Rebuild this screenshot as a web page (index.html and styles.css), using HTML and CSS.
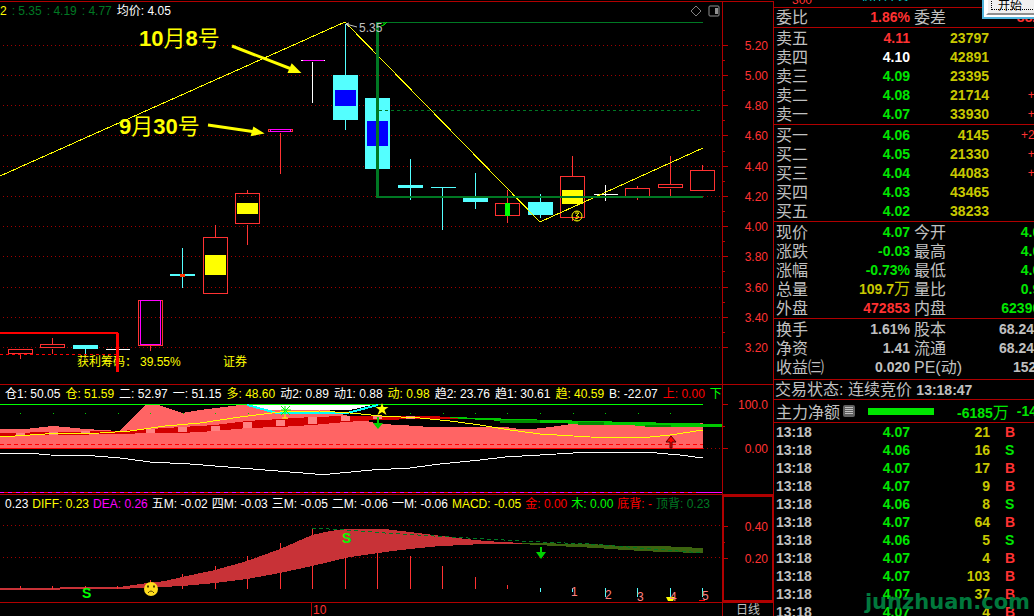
FILE: index.html
```
<!DOCTYPE html>
<html lang="zh-CN">
<head>
    <meta charset="UTF-8">
    <meta name="viewport" content="width=device-width, initial-scale=1.0">
    <title>日线</title>
    <link rel="stylesheet" href="styles.css">
</head>
<body>
<div class="app">
    <main class="charts">
        <!-- K线 -->
        <section class="panel">
            <div class="plot">
                <div class="legend legend-top">
                    <span class="yellow">2</span>
                    <span class="dark">: 5.35</span>
                    <span class="dark">: 4.19</span>
                    <span class="dark">: 4.77</span>
                    <span>均价: 4.05</span>
                    <svg class="tools" width="30" height="14" viewBox="0 0 30 14">
                        <path d="M6 2L11 7L6 12L1 7Z" fill="none" stroke="#808080"/>
                        <rect x="19" y="2" width="10" height="10" rx="1" fill="none" stroke="#909090"/>
                        <rect x="25" y="4" width="3" height="6" fill="#909090"/>
                    </svg>
                </div>
                <svg class="canvas k-canvas" viewBox="0 20 722 364" preserveAspectRatio="xMaxYMid meet">
                    <path class="grid" transform="translate(0 .5)" d="M3 45H721M3 75H721M3 105H721M3 135H721M3 166H721M3 196H721M3 226H721M3 256H721M3 287H721M3 317H721M3 347H721"/>
                    <g class="crisp" transform="translate(.5 .5)" fill="none">
                        <g stroke="#ff3232">
                            <path d="M8 349h24v4H8zM20 348v1M20 353v5"/>
                            <path d="M40 344h24v3H40zM52 337v7M52 348v5"/>
                            <path d="M138 300h24v45h-24zM150 345v5"/>
                            <path d="M203 237h24v56h-24zM215 224v13"/>
                            <path d="M235 193h24v30h-24zM247 189v4M247 224v20"/>
                            <path d="M268 129h24v2h-24zM280 132v41"/>
                            <path d="M495 203h24v12h-24zM507 189v33"/>
                            <path d="M560 176h24v41h-24zM572 155v21M572 218v2"/>
                            <path d="M625 188h24v8h-24zM637 185v3M637 196v3"/>
                            <path d="M658 184h24v3h-24zM670 155v29M670 188v8"/>
                            <path d="M690 170h24v20h-24zM702 164v6"/>
                        </g>
                        <g stroke="#ff00ff">
                            <path d="M140 300h20v44h-20zM270 129h20v2h-20z"/>
                            <path d="M302 60h21"/>
                        </g>
                        <g stroke="#fff">
                            <path d="M105 349h24M300 60h2M323 60h1M312 61v41M593 194h24M605 184v16"/>
                        </g>
                        <g stroke="#54ffff">
                            <path d="M85 344v9M182 247v40M345 23v106M410 158v41M430 187h25M442 187v42M475 172v32M475 202v6M540 193v24"/>
                        </g>
                    </g>
                    <g class="crisp">
                        <g fill="#54ffff">
                            <rect x="73" y="345" width="25" height="4"/>
                            <rect x="170" y="274" width="25" height="2"/>
                            <rect x="333" y="75" width="25" height="45"/>
                            <rect x="365" y="98" width="25" height="71"/>
                            <rect x="398" y="185" width="25" height="3"/>
                            <rect x="463" y="197" width="25" height="5"/>
                            <rect x="528" y="202" width="25" height="13"/>
                        </g>
                        <g fill="#0000ff">
                            <rect x="335" y="90" width="21" height="16"/>
                            <rect x="367" y="121" width="21" height="25"/>
                        </g>
                        <g fill="#ffff00">
                            <rect x="205" y="255" width="21" height="20"/>
                            <rect x="237" y="203" width="21" height="11"/>
                            <rect x="562" y="190" width="21" height="14"/>
                        </g>
                        <rect x="180" y="274" width="5" height="3" fill="#ff3200"/>
                        <rect x="505" y="203" width="5" height="13" fill="#00ff00"/>
                    </g>
                    <path class="crisp trend" d="M0 176L345 22L540 222L703 148"/>
                    <g class="crisp">
                        <g fill="#007823">
                            <rect x="376" y="22" width="3" height="176"/>
                            <rect x="377" y="22" width="326" height="1"/>
                            <rect x="377" y="196" width="326" height="2"/>
                        </g>
                        <path d="M379 110.500H703" stroke="#007823" stroke-dasharray="3 3"/>
                        <path d="M0 354.500H116" stroke="#ff0000" stroke-dasharray="3 3"/>
                    </g>
                    <path d="M346 24L357 27M346 24l3 3M346 24l3-1" stroke="#c0c0c0" fill="none"/>
                    <text x="359" y="32" class="label gray">5.35</text>
                    <path d="M381 26l3-1 3-3M384 22v3" stroke="#00e600" fill="none"/>
                    <text x="77" y="366" class="label yellow">获利筹码：</text>
                    <text x="140" y="366" class="label yellow">39.55%</text>
                    <text x="223" y="366" class="label yellow">证券</text>
                    <g class="crisp" fill="#ff0000">
                        <rect x="0" y="332" width="118" height="2"/>
                        <rect x="116" y="333" width="3" height="39"/>
                    </g>
                    <g stroke="#ffff00" fill="none">
                        <circle cx="577" cy="216" r="5"/>
                        <path d="M575 213h4l-3 3h2q2 2-3 3M577 211v1M577 220v1"/>
                    </g>
                    <text x="139" y="46" class="note"><tspan class="num">10</tspan>月<tspan class="num">8</tspan>号</text>
                    <text x="119" y="134" class="note"><tspan class="num">9</tspan>月<tspan class="num">30</tspan>号</text>
                    <g stroke="#ffff00" stroke-width="3" fill="#ffff00">
                        <path d="M232 46L294 70M208 125L256 132"/>
                        <path d="M292 65L299 72L289 72ZM254 128L262 133L252 135Z" stroke-width="2"/>
                    </g>
                </svg>
            </div>
            <svg class="axis" height="382" viewBox="0 2 50 382" preserveAspectRatio="xMinYMin meet">
                <path class="crisp" transform="translate(0 .5)" stroke="#c00000" d="M0 45h5M0 75h5M0 105h5M0 135h5M0 166h5M0 196h5M0 226h5M0 256h5M0 287h5M0 317h5M0 347h5M0 60h2M0 90h2M0 120h2M0 151h2M0 181h2M0 211h2M0 241h2M0 271h2M0 302h2M0 332h2"/>
                <g class="label axis-label">
                    <text x="45" y="50">5.20</text>
                    <text x="45" y="80">5.00</text>
                    <text x="45" y="110">4.80</text>
                    <text x="45" y="140">4.60</text>
                    <text x="45" y="171">4.40</text>
                    <text x="45" y="201">4.20</text>
                    <text x="45" y="231">4.00</text>
                    <text x="45" y="261">3.80</text>
                    <text x="45" y="292">3.60</text>
                    <text x="45" y="322">3.40</text>
                    <text x="45" y="352">3.20</text>
                </g>
            </svg>
        </section>

        <!-- 仓位指标 -->
        <section class="panel">
            <div class="plot">
                <div class="legend">
                    <span>仓1: 50.05</span>
                    <span class="yellow">仓: 51.59</span>
                    <span>二: 52.97</span>
                    <span>一: 51.15</span>
                    <span class="yellow">多: 48.60</span>
                    <span>动2: 0.89</span>
                    <span>动1: 0.88</span>
                    <span class="yellow">动: 0.98</span>
                    <span>趋2: 23.76</span>
                    <span>趋1: 30.61</span>
                    <span class="yellow">趋: 40.59</span>
                    <span>B: -22.07</span>
                    <span class="red">上: 0.00</span>
                    <span class="lime">下</span>
                </div>
                <svg class="canvas pos-canvas" viewBox="0 403 722 91" preserveAspectRatio="xMaxYMid meet">
                    <g class="crisp">
                        <path fill="#ff6464" d="M0 429H25L52 426L65 427L85 429L119 431L146 405H158L182 413L200 410L240 405H250L268 409H325L345 415L362 420L380 424L402 425L430 427H505L520 429H532L550 427L572 424L600 424L640 425H690L703 423V449H0Z"/>
                        <path fill="#fff" d="M252 405H372L350 410H265Z"/>
                        <path fill="#d20000" d="M0 433L119 431L150 429L182 427L215 425L247 421L280 419L312 417L345 416L377 416L420 416L460 417V419L420 419L377 420L345 422L312 425L280 427L247 428L215 431L182 433L150 433L119 434L0 436Z"/>
                        <path fill="#ff8282" d="M16 433h9v3h-9zM49 432h9v3h-9zM81 431h9v3h-9zM146 429h9v4h-9zM178 427h9v5h-9zM211 426h9v5h-9zM243 422h9v6h-9zM276 420h9v6h-9zM308 417h9v7h-9zM341 416h9v5h-9zM373 416h9v3h-9zM406 416h9v3h-9z"/>
                        <path fill="#00c800" d="M450 417L483 418L590 421L722 424V427L680 427L620 425L550 423L483 420L450 418Z"/>
                        <path fill="#008c00" d="M500 420h40v3h-40zM578 422h26v3h-26zM645 425h26v2h-26z"/>
                        <path stroke="#00ff00" d="M0 404.500H703"/>
                        <path stroke="#00c800" stroke-dasharray="1 31.500" d="M20 413.500H703"/>
                        <path stroke="#ff0000" d="M0 448.500H703"/>
                        <path stroke="#ff0000" stroke-dasharray="4 3" d="M0 444.500H703"/>
                        <path class="grid" d="M703 448.500H721"/>
                        <path stroke="#00ffff" stroke-width="2" fill="none" d="M247 405L277 413H347L378 405"/>
                        <path class="trend" d="M0 437L45 434L100 433L130 431L165 426L200 423L240 417L280 412L320 411L350 413L382 416L420 418L450 421L480 425L510 430L540 434L590 437L640 438L670 435L703 430"/>
                        <path stroke="#fff" fill="none" d="M0 453H28L50 455L95 456L120 458L150 462L190 464L240 468L290 472L315 474H330L372 470L410 468L440 464L480 460L505 457L540 455L590 452H645L680 455L703 458"/>
                        <path stroke="#ff0000" d="M0 492.500H722"/>
                        <path stroke="#ff00ff" stroke-dasharray="4 4" d="M0 492.500H700"/>
                        <path stroke="#ff00ff" d="M700 492.500h22"/>
                    </g>
                    <path stroke="#00ff00" fill="none" d="M281 406l9 9M290 406l-9 9M281 410h10M285 406v9"/>
                    <path stroke="#ffff00" fill="none" d="M285 414v4M282 418h6"/>
                    <path fill="#ffff00" d="M382 403l1.500 4h5l-4 3l2 5l-4.500-3l-4.500 3l2-5l-4-3h5z"/>
                    <path fill="#00d200" d="M377 417h2v6h4l-5 6l-5-6h4z"/>
                    <path fill="#ff0000" stroke="#500000" d="M670 448h2v-6h4l-5-6l-5 6h4z"/>
                </svg>
            </div>
            <svg class="axis" height="109" viewBox="0 385 50 109" preserveAspectRatio="xMinYMin meet">
                <path class="crisp" transform="translate(0 .5)" stroke="#c00000" d="M0 404h5M0 448h5M0 426h2"/>
                <g class="label axis-label">
                    <text x="45" y="409">100.0</text>
                    <text x="45" y="453">0.00</text>
                </g>
            </svg>
        </section>

        <!-- MACD -->
        <section class="panel">
            <div class="plot">
                <div class="legend legend-macd">
                    <span>0.23</span>
                    <span class="yellow">DIFF: 0.23</span>
                    <span class="magenta">DEA: 0.26</span>
                    <span>五M: -0.02</span>
                    <span>四M: -0.03</span>
                    <span>三M: -0.05</span>
                    <span>二M: -0.06</span>
                    <span>一M: -0.06</span>
                    <span class="yellow">MACD: -0.05</span>
                    <span class="red">金: 0.00</span>
                    <span class="lime">木: 0.00</span>
                    <span class="red">底背: -</span>
                    <span class="dark">顶背: 0.23</span>
                </div>
                <svg class="canvas macd-canvas" viewBox="0 513 722 88" preserveAspectRatio="xMaxYMid meet">
                    <path class="grid" d="M3 525.500H721M3 557.500H721"/>
                    <g class="crisp">
                        <path fill="#c83237" d="M0 588L120 587L140 584L165 581L182 577L215 570L247 561L280 549L312 535L330 531L345 529H385L410 532L450 537L475 540L500 542L525 543V544H480L465 545L440 546L410 549L385 552L350 557L312 566L280 573L247 579L215 583L182 586L120 589L0 590Z"/>
                        <path fill="#3c640f" d="M522 543L590 544L620 546L660 546L703 548V553L662 552L625 550L597 548L555 546L522 544Z"/>
                        <path stroke="#ff3232" transform="translate(.5 0)" d="M20 586v3M52 586v3M85 586v3M117 586v3M150 580v9M182 574v3M182 586v3M215 566v4M215 583v6M247 556v5M247 579v10M280 543v6M280 573v16M312 529v6M312 566v23M345 557v32M377 553v36M410 556v33M442 566v23M475 577v12M507 585v4"/>
                        <path stroke="#54ffff" transform="translate(.5 0)" d="M540 588v4M572 588v4M605 588v9M637 588v9M670 588v9M702 588v9"/>
                        <path stroke="#007823" fill="none" stroke-dasharray="4 3" d="M312 528L345 530L385 533L450 537L540 542L590 544L703 553"/>
                    </g>
                    <path fill="#00d200" d="M540 547h2v5h4l-5 7l-5-7h4z"/>
                    <path fill="#ffff00" d="M666 597h9l-2 4h-5z"/>
                    <rect x="699" y="600" width="6" height="1" fill="#ff0000"/>
                    <g class="label pink">
                        <text x="571" y="596">1</text>
                        <text x="605" y="599">2</text>
                        <text x="637" y="601">3</text>
                        <text x="670" y="601">4</text>
                        <text x="702" y="600">5</text>
                    </g>
                    <g class="signal">
                        <text x="82" y="598">S</text>
                        <text x="342" y="543">S</text>
                    </g>
                    <circle cx="151" cy="589" r="7" fill="#ffdc1e"/>
                    <path d="M147 586.500h2M153 586.500h2" stroke="#503c00" stroke-width="2"/>
                    <path d="M148 593q3-4 6 0" fill="none" stroke="#503c00"/>
                </svg>
            </div>
            <svg class="axis selected" height="107" viewBox="0 494 50 107" preserveAspectRatio="xMinYMin meet">
                <path class="crisp" transform="translate(0 .5)" stroke="#c00000" d="M0 525h5M0 557h5M0 541h2"/>
                <g class="label axis-label">
                    <text x="45" y="530">0.40</text>
                    <text x="45" y="562">0.20</text>
                </g>
            </svg>
        </section>

        <footer class="timeline">
            <span class="month">10</span>
            <span class="period">日线</span>
        </footer>
    </main>

    <aside class="quote">
        <div class="code-row"><span class="tag">300</span><span class="stock">软件开发</span></div>
        <table class="pairs first">
            <tr><th>委比</th><td class="rise">1.86%</td><th class="second">委差</th><td class="rise">8829</td></tr>
        </table>
        <table class="book">
            <tr><th>卖五</th><td class="rise">4.11</td><td class="vol">23797</td><td></td></tr>
            <tr><th>卖四</th><td class="flat">4.10</td><td class="vol">42891</td><td></td></tr>
            <tr><th>卖三</th><td class="fall">4.09</td><td class="vol">23395</td><td></td></tr>
            <tr><th>卖二</th><td class="fall">4.08</td><td class="vol">21714</td><td class="rise diff">+10</td></tr>
            <tr><th>卖一</th><td class="fall">4.07</td><td class="vol">33930</td><td class="rise diff">+21</td></tr>
        </table>
        <table class="book">
            <tr><th>买一</th><td class="fall">4.06</td><td class="vol">4145</td><td class="rise diff">+200</td></tr>
            <tr><th>买二</th><td class="fall">4.05</td><td class="vol">21330</td><td class="rise diff">+16</td></tr>
            <tr><th>买三</th><td class="fall">4.04</td><td class="vol">44083</td><td class="rise diff">+12</td></tr>
            <tr><th>买四</th><td class="fall">4.03</td><td class="vol">43465</td><td></td></tr>
            <tr><th>买五</th><td class="fall">4.02</td><td class="vol">38233</td><td></td></tr>
        </table>
        <table class="pairs">
            <tr><th>现价</th><td class="fall">4.07</td><th class="second">今开</th><td class="fall">4.06</td></tr>
            <tr><th>涨跌</th><td class="fall">-0.03</td><th class="second">最高</th><td class="fall">4.09</td></tr>
            <tr><th>涨幅</th><td class="fall">-0.73%</td><th class="second">最低</th><td class="fall">4.06</td></tr>
            <tr><th>总量</th><td class="vol">109.7<i>万</i></td><th class="second">量比</th><td class="fall">0.96</td></tr>
            <tr><th>外盘</th><td class="rise">472853</td><th class="second">内盘</th><td class="fall">623906</td></tr>
        </table>
        <table class="pairs basics">
            <tr><th>换手</th><td>1.61%</td><th class="second">股本</th><td>68.24亿</td></tr>
            <tr><th>净资</th><td>1.41</td><th class="second">流通</th><td>68.24亿</td></tr>
            <tr><th>收益㈢</th><td>0.020</td><th class="second">PE(动)</th><td>152.6</td></tr>
        </table>
        <div class="state">交易状态: 连续竞价 <b>13:18:47</b></div>
        <div class="flow">
            <span>主力净额</span>
            <svg width="12" height="12" viewBox="0 0 12 12">
                <rect width="12" height="12" rx="2" fill="#606060"/>
                <path class="crisp" d="M2 2.500h8M2 4.500h8M2 6.500h8M2 8.500h8" stroke="#c0c0c0"/>
            </svg>
            <span class="bar"></span>
            <span class="fall amount"><b>-6185</b>万</span>
            <b class="fall">-14%</b>
        </div>
        <table class="ticks">
            <tr><td>13:18</td><td class="fall">4.07</td><td class="vol">21</td><td class="rise">B</td></tr>
            <tr><td>13:18</td><td class="fall">4.06</td><td class="vol">16</td><td class="fall">S</td></tr>
            <tr><td>13:18</td><td class="fall">4.07</td><td class="vol">17</td><td class="rise">B</td></tr>
            <tr><td>13:18</td><td class="fall">4.07</td><td class="vol">9</td><td class="rise">B</td></tr>
            <tr><td>13:18</td><td class="fall">4.06</td><td class="vol">8</td><td class="fall">S</td></tr>
            <tr><td>13:18</td><td class="fall">4.07</td><td class="vol">64</td><td class="rise">B</td></tr>
            <tr><td>13:18</td><td class="fall">4.06</td><td class="vol">5</td><td class="fall">S</td></tr>
            <tr><td>13:18</td><td class="fall">4.07</td><td class="vol">4</td><td class="rise">B</td></tr>
            <tr><td>13:18</td><td class="fall">4.07</td><td class="vol">103</td><td class="rise">B</td></tr>
            <tr><td>13:18</td><td class="fall">4.07</td><td class="vol">37</td><td class="rise">B</td></tr>
            <tr><td>13:18</td><td class="fall">4.07</td><td class="vol">4</td><td class="rise">B</td></tr>
        </table>
        <div class="dialog"><button type="button">开始</button></div>
        <div class="watermark">junzhuan.com</div>
    </aside>
</div>
</body>
</html>
```

FILE: styles.css
```
* {
    box-sizing: border-box;
}
body {
    margin: 0;
    background: #000;
    color: #fff;
    font-family: "Liberation Sans", "Noto Sans CJK SC", sans-serif;
    font-size: 12px;
    overflow: hidden;
}
.app {
    display: grid;
    grid-template-columns: minmax(0, 1fr) 260px;
    height: 100vh;
}

/* 左侧图表 */
.charts {
    padding-top: 1px;
    min-width: 0;
}
.panel {
    display: flex;
    border-top: 1px solid #b00000;
}
.plot {
    flex: 1;
    min-width: 0;
}
.legend {
    display: flex;
    gap: 5px;
    height: 18px;
    line-height: 18px;
    padding-left: 5px;
    white-space: nowrap;
    overflow: hidden;
}
.legend-top {
    padding-left: 0;
}
.legend-macd {
    gap: 4px;
}
.tools {
    margin: 2px 2px 0 auto;
}
.canvas {
    display: block;
    width: 100%;
}
.k-canvas {
    height: 364px;
}
.pos-canvas {
    height: 91px;
}
.macd-canvas {
    height: 88px;
}
.axis {
    display: block;
    width: 52px;
    flex: none;
    border-left: 1px solid #b00000;
    border-right: 1px solid #b00000;
}
.axis.selected {
    outline: 2px solid #b00000;
    outline-offset: -2px;
}
.crisp {
    shape-rendering: crispEdges;
}
.grid {
    stroke: #a00000;
    stroke-dasharray: 1 3;
}
.trend {
    fill: none;
    stroke: #ffff00;
}
.label {
    font-size: 12px;
}
.axis-label {
    fill: #ff3232;
    text-anchor: end;
}
.note {
    font-size: 22px;
    fill: #ffff00;
}
.note .num {
    font-weight: bold;
}
.signal {
    font-size: 14px;
    font-weight: bold;
    fill: #00ff00;
}
.yellow { color: #ffff00; fill: #ffff00; }
.magenta { color: #ff00ff; }
.red { color: #ff0000; }
.lime { color: #00ff00; }
.dark { color: #007823; }
.gray { fill: #c0c0c0; }
.pink { fill: #ff8080; }

.timeline {
    display: flex;
    height: 15px;
    line-height: 14px;
    border-top: 1px solid #b00000;
    border-right: 1px solid #b00000;
}
.month {
    margin-left: auto;
    width: 411px;
    padding-left: 1px;
    border-left: 1px solid #b00000;
    color: #ff3232;
}
.period {
    width: 51px;
    padding-left: 13px;
    border-left: 1px solid #b00000;
    color: #c0c0c0;
}

/* 右侧报价 */
.quote {
    position: relative;
    overflow: hidden;
    color: #c0c0c0;
    font-size: 16px;
}
.quote table {
    width: 274px;
    table-layout: fixed;
    border-collapse: separate;
    border-spacing: 0;
}
.quote th, .quote td {
    padding: 0;
    height: 19px;
    line-height: 19px;
    white-space: nowrap;
}
.quote th {
    font-weight: normal;
    text-align: left;
    padding-left: 2px;
}
.quote td {
    font-size: 14px;
    font-weight: bold;
    text-align: right;
}
.quote td i {
    font-size: 16px;
    font-style: normal;
    font-weight: normal;
    line-height: 16px;
}
.code-row {
    display: flex;
    gap: 48px;
    height: 7px;
    line-height: 16px;
    padding-left: 18px;
    font-size: 12px;
    overflow: hidden;
}
.code-row .tag {
    margin-top: -8px;
    color: #ff3232;
}
.code-row .stock {
    margin-top: -12px;
    color: #00e6e6;
}
.quote .book, .quote .pairs {
    padding-top: 1px;
    border-top: 1px solid #b00000;
}
.quote .first {
    padding-top: 0;
}
.quote .basics {
    padding-bottom: 2px;
}
.book th, .pairs th {
    width: 50px;
}
.book td:nth-child(2), .pairs td:nth-child(2) {
    width: 86px;
}
.book td:nth-child(3) {
    width: 79px;
}
.quote .diff {
    font-size: 12px;
    font-weight: normal;
}
.quote .second {
    width: 60px;
    padding-left: 4px;
}
.rise { color: #ff3232; }
.fall { color: #00e600; }
.flat { color: #fff; }
.vol { color: #c8c800; }
.state {
    height: 20px;
    line-height: 19px;
    padding-left: 1px;
    border-top: 1px solid #b00000;
    white-space: nowrap;
}
.state b, .flow b {
    font-size: 14px;
}
.flow {
    display: flex;
    align-items: center;
    height: 24px;
    padding-left: 2px;
    border-top: 1px solid #b00000;
    border-bottom: 1px solid #b00000;
    white-space: nowrap;
}
.flow > * {
    flex: none;
}
.flow svg {
    margin-left: 3px;
}
.flow .bar {
    width: 66px;
    height: 7px;
    margin-left: 13px;
    background: #00e600;
}
.flow .amount {
    margin: 0 8px 0 23px;
}
.quote .ticks td {
    height: 18px;
    line-height: 18px;
}
.quote .ticks td:first-child {
    width: 50px;
    padding-left: 2px;
    text-align: left;
}
.ticks td:nth-child(2) {
    width: 86px;
}
.ticks td:nth-child(3) {
    width: 80px;
}
.quote .ticks td:nth-child(4) {
    padding-left: 15px;
    text-align: left;
}
.dialog {
    position: absolute;
    top: -9px;
    right: -8px;
    width: 60px;
    height: 28px;
    padding: 0 0 2px 2px;
    background: #fff;
    border: 2px solid #50b4dc;
}
.dialog button {
    width: 60px;
    height: 22px;
    padding: 0 12px 0 0;
    border: 2px solid #909090;
    border-top-color: #fff;
    border-left-color: #fff;
    background: #f0f0f0;
    color: #000;
    font-family: inherit;
    font-size: 12px;
    outline: 1px dotted #000;
    outline-offset: -6px;
}
.watermark {
    position: absolute;
    right: 4px;
    bottom: 3px;
    color: #00783c;
    font-family: "DejaVu Sans", sans-serif;
    font-size: 21px;
    font-weight: bold;
    line-height: 24px;
}
```
